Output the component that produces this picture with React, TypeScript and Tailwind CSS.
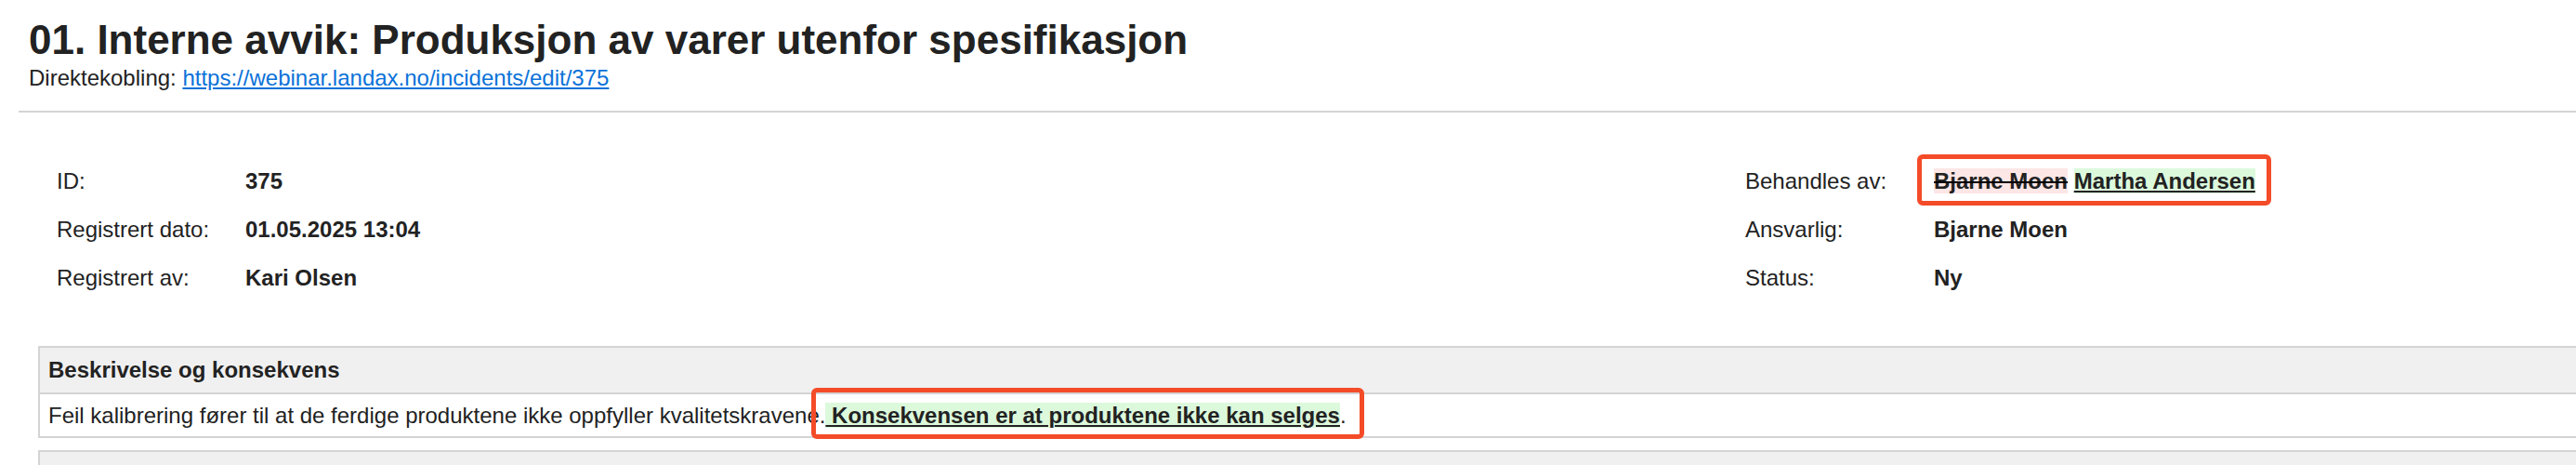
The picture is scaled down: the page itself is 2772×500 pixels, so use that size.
// Incident detail page with change highlights

import React from 'react';

const font = { fontFamily: '"Liberation Sans", Arial, sans-serif' };

const InfoRow: React.FC<{ label: string; children: React.ReactNode }> = ({ label, children }) => (
  <div className="flex h-[52px] items-center">
    <div className="w-[203px] shrink-0">{label}</div>
    <div className="font-bold">{children}</div>
  </div>
);

const Marked: React.FC<{ children: React.ReactNode; className: string }> = ({ children, className }) => (
  <span className="relative">
    {children}
    <span className={`pointer-events-none absolute rounded-[6px] border-[5px] border-[#f44b29] ${className}`} />
  </span>
);

export default function App() {
  return (
    <div className="h-[500px] overflow-hidden bg-white text-[#222]" style={font}>
      {/* Header */}
      <div className="pl-[31px] pt-[18px]">
        <h1 className="text-[44px] font-bold leading-[50px]">
          01. Interne avvik: Produksjon av varer utenfor spesifikasjon
        </h1>
        <div className="mt-[2px] text-[24px] leading-[28px]">
          Direktekobling:{' '}
          <a href="#" className="text-[#0b72d9] underline underline-offset-2">
            https://webinar.landax.no/incidents/edit/375
          </a>
        </div>
      </div>
      <div className="ml-[20px] mt-[21px] h-[2px] bg-[#d4d4d4]" />

      {/* Info */}
      <div className="flex pl-[61px] pt-[48px] text-[24px]">
        <div className="w-[1817px] shrink-0">
          <InfoRow label="ID:">375</InfoRow>
          <InfoRow label="Registrert dato:">01.05.2025 13:04</InfoRow>
          <InfoRow label="Registrert av:">Kari Olsen</InfoRow>
        </div>
        <div>
          <InfoRow label="Behandles av:">
            <Marked className="-left-[18px] -right-[17px] -top-[15px] -bottom-[13px]">
              <span className="bg-[#fde6e6] line-through decoration-2 decoration-black">Bjarne Moen</span>{' '}
              <span className="bg-[#dcf9dc] underline decoration-2 underline-offset-2">Martha Andersen</span>
            </Marked>
          </InfoRow>
          <InfoRow label="Ansvarlig:">Bjarne Moen</InfoRow>
          <InfoRow label="Status:">Ny</InfoRow>
        </div>
      </div>

      {/* Beskrivelse */}
      <div className="ml-[41px] mt-[47px] border-[2px] border-r-0 border-[#d4d4d4] text-[24px]">
        <div className="flex h-[48px] items-center bg-[#f0f0f0] px-[9px] font-bold">Beskrivelse og konsekvens</div>
        <div className="flex h-[47px] items-center border-t-[2px] border-[#d4d4d4] px-[9px]">
          <span>
            Feil kalibrering fører til at de ferdige produktene ikke oppfyller kvalitetskravene.
            <Marked className="-left-[15px] -right-[19px] -top-[16px] -bottom-[12px]">
              <span className="bg-[#dcf9dc] font-bold underline decoration-2 underline-offset-2">
                {' '}Konsekvensen er at produktene ikke kan selges
              </span>
              .
            </Marked>
          </span>
        </div>
      </div>

      <div className="ml-[41px] mt-[13px] h-[60px] border-[2px] border-r-0 border-b-0 border-[#d4d4d4] bg-[#f0f0f0]" />
    </div>
  );
}
